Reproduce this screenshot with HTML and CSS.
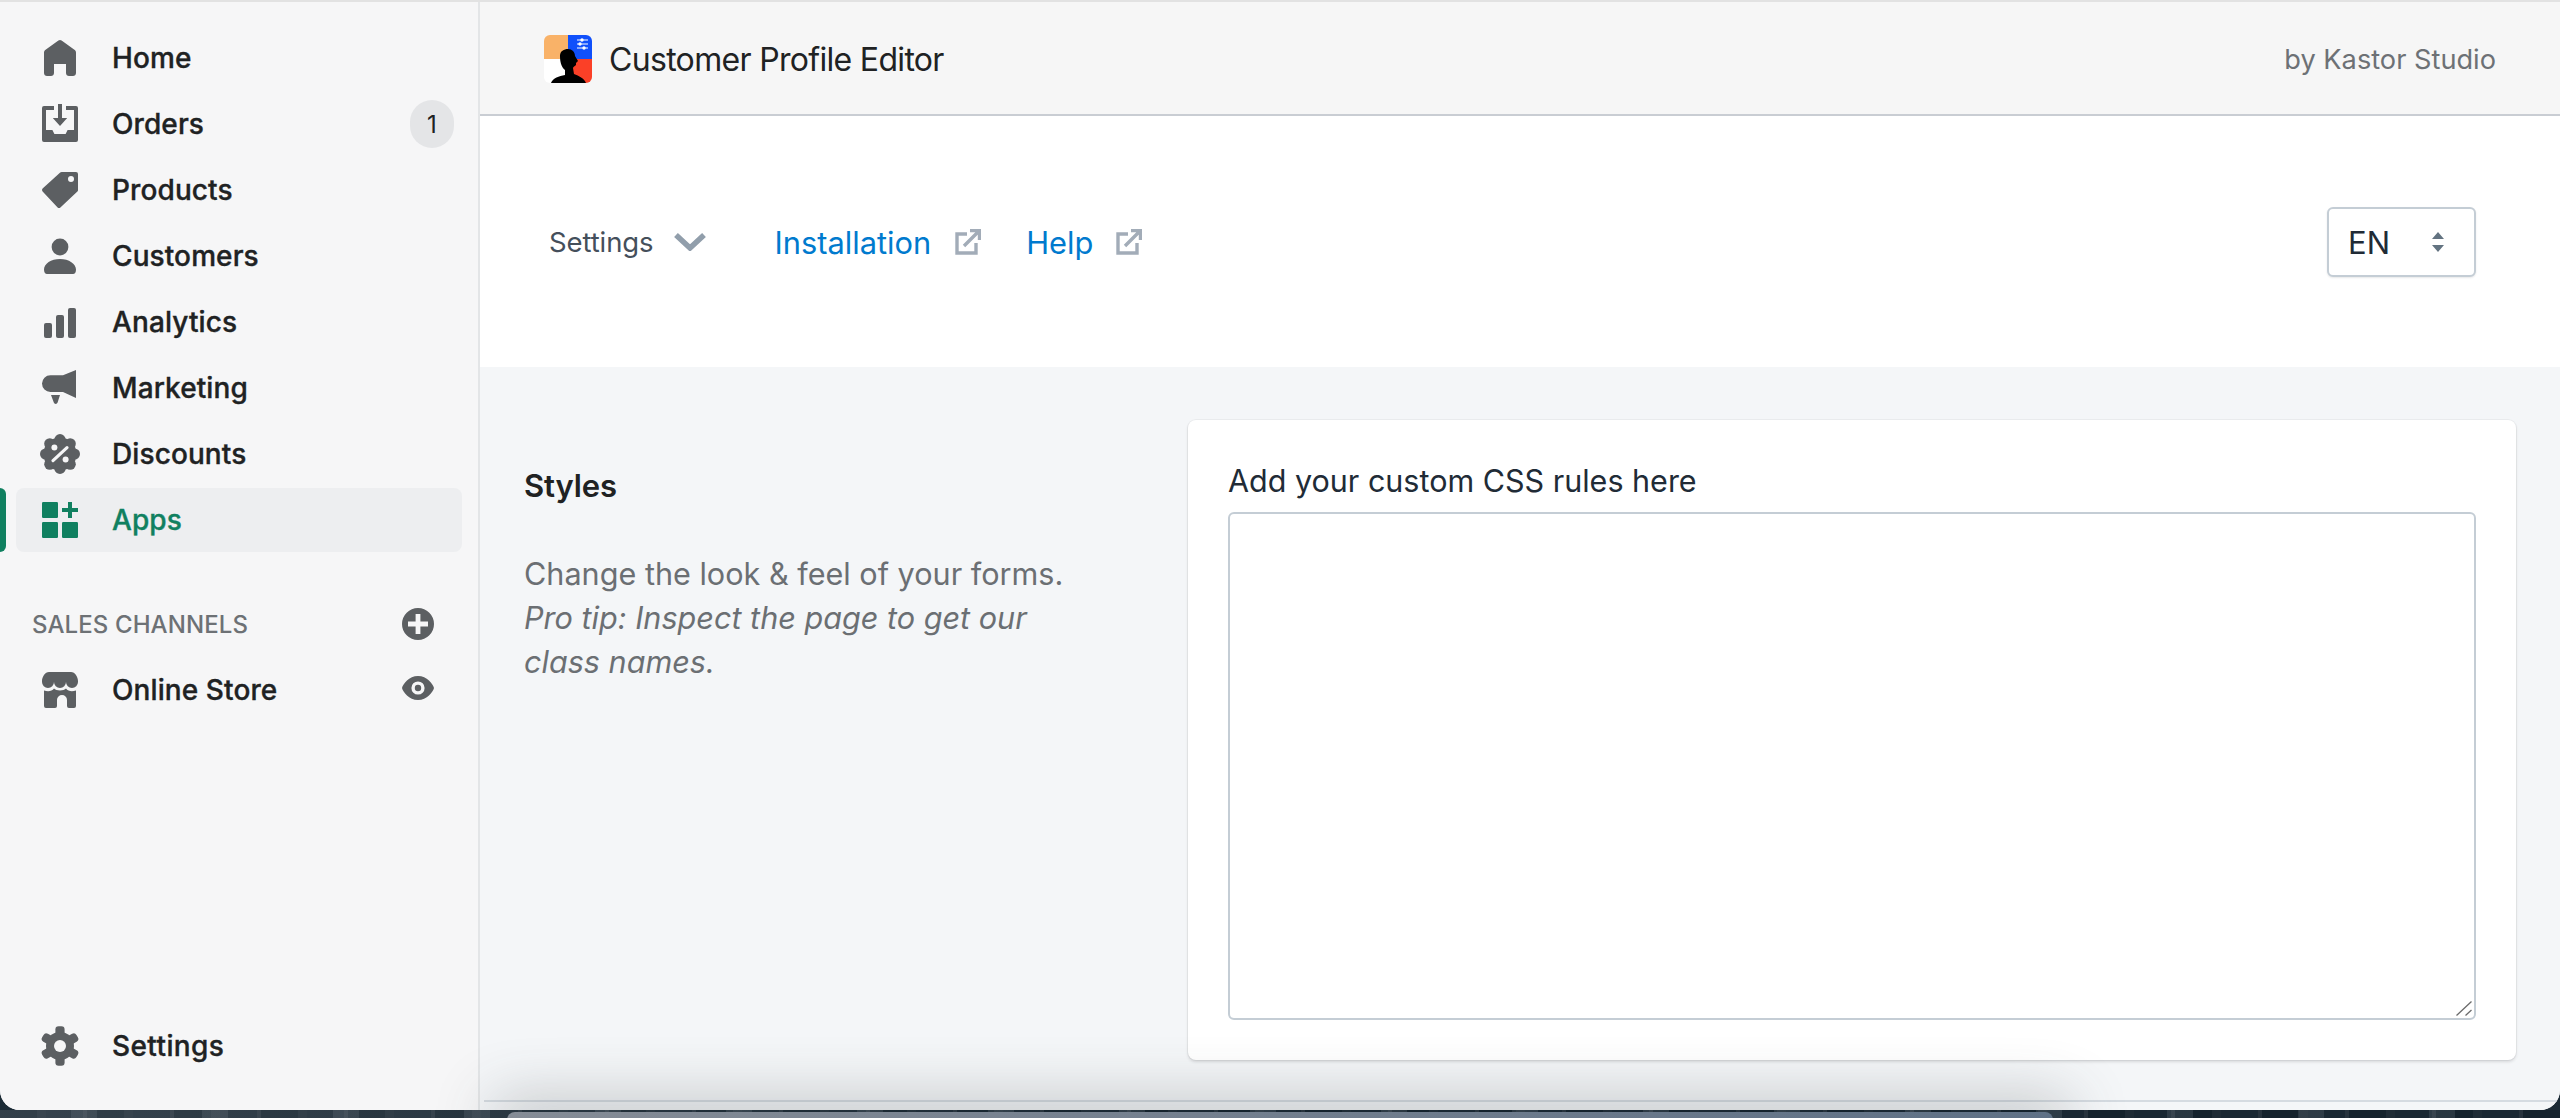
FILE: index.html
```html
<!DOCTYPE html>
<html lang="en">
<head>
<meta charset="utf-8">
<title>Customer Profile Editor</title>
<link rel="stylesheet" href="styles.css">
</head>
<body>
<div class="window">
  <aside class="sidebar">
    <nav class="menu">
      <a class="item"><svg class="ico" viewBox="0 0 20 20"><path d="M18 7.261V17.5c0 .841-.672 1.5-1.5 1.5h-2c-.828 0-1.500-.659-1.500-1.500V13H7v4.477C7 18.318 6.328 19 5.500 19h-2c-.828 0-1.500-.682-1.500-1.523V7.261a1.500 1.500 0 0 1 .615-1.210l6.590-4.820a1.481 1.481 0 0 1 1.590 0l6.590 4.820A1.500 1.500 0 0 1 18 7.260z"/></svg><span class="label">Home</span></a>
      <a class="item"><svg class="ico" viewBox="0 0 20 20"><path fill-rule="evenodd" d="M2 1h5v2H3v10h3.200l1 2h5.600l1-2H17V3h-4V1h5a1 1 0 0 1 1 1v16a1 1 0 0 1-1 1H2a1 1 0 0 1-1-1V2a1 1 0 0 1 1-1z"/><path d="M9 0h2v7h2.600L10 11 6.400 7H9z"/></svg><span class="label">Orders</span><span class="badge">1</span></a>
      <a class="item"><svg class="ico" viewBox="0 0 20 20"><path fill-rule="evenodd" d="M18 1h-7.200a1 1 0 0 0-.7.3l-8.800 8a1 1 0 0 0 0 1.400l7.500 8a1 1 0 0 0 1.400 0l8.500-7.900a1 1 0 0 0 .3-.7V2a1 1 0 0 0-1-1zm-2.500 5a1.500 1.500 0 1 1 0-3 1.500 1.500 0 0 1 0 3z"/></svg><span class="label">Products</span></a>
      <a class="item"><svg class="ico" viewBox="0 0 20 20"><circle cx="10" cy="5.500" r="4.200"/><path d="M10 11.500c-4.500 0-8 2.400-8 5.300C2 18.400 2.700 19 3.500 19h13c.9 0 1.500-.6 1.500-2.200 0-2.900-3.500-5.300-8-5.300z"/></svg><span class="label">Customers</span></a>
      <a class="item"><svg class="ico" viewBox="0 0 20 20"><rect x="2" y="10.500" width="4" height="7.500" rx="1"/><rect x="8" y="6.500" width="4" height="11.500" rx="1"/><rect x="14" y="3" width="4" height="15" rx="1"/></svg><span class="label">Analytics</span></a>
      <a class="item"><svg class="ico" viewBox="0 0 20 20"><path d="M18 1v14l-6.500-3H5.200a4.200 4.200 0 0 1 0-8.400h6.300z"/><path d="M5.500 13.500h4.500l-1.200 3.800a1 1 0 0 1-1.900 0z"/></svg><span class="label">Marketing</span></a>
      <a class="item"><svg class="ico" viewBox="0 0 20 20"><circle cx="10" cy="10" r="8.300"/><circle cx="10" cy="2.800" r="2.800"/><circle cx="15.100" cy="4.900" r="2.800"/><circle cx="17.200" cy="10" r="2.800"/><circle cx="15.100" cy="15.100" r="2.800"/><circle cx="10" cy="17.200" r="2.800"/><circle cx="4.900" cy="15.100" r="2.800"/><circle cx="2.800" cy="10" r="2.800"/><circle cx="4.900" cy="4.900" r="2.800"/><circle class="cut" cx="7.200" cy="6.800" r="1.500"/><circle class="cut" cx="12.800" cy="12.800" r="1.500"/><path class="slash" d="M6.500 13.300l7-6.500"/></svg><span class="label">Discounts</span></a>
      <a class="item active"><span class="bar"></span><svg class="ico" viewBox="0 0 20 20"><rect x="1" y="1" width="8" height="8" rx=".6"/><rect x="1" y="11" width="8" height="8" rx=".6"/><rect x="11" y="11" width="8" height="8" rx=".6"/><path d="M14 1h2v3h3v2h-3v3h-2V6h-3V4h3z"/></svg><span class="label">Apps</span></a>
    </nav>
    <div class="section-head"><span class="section-title">SALES CHANNELS</span><svg class="side-ico" viewBox="0 0 20 20"><path fill-rule="evenodd" d="M10 2a8 8 0 1 0 0 16 8 8 0 0 0 0-16zM8.800 5h2.400v3.800H15v2.400h-3.800V15H8.800v-3.800H5V8.800h3.800z"/></svg></div>
    <a class="item"><svg class="ico" viewBox="0 0 20 20"><path d="M4.500 1h11c2 0 3.500 2.500 3.500 4.500V6a3 3 0 0 1-6 0 3 3 0 0 1-6 0 3 3 0 0 1-6 0v-.5C1 3.500 2.500 1 4.500 1z"/><path d="M2 10.200c2 .8 4 .4 5-.9 1 1.300 5 1.300 6 0 1 1.300 3 1.700 5 .9V18a1 1 0 0 1-1 1h-2.500a1 1 0 0 1-1-1v-3a2.500 2.500 0 0 0-5 0v3a1 1 0 0 1-1 1H3a1 1 0 0 1-1-1z"/></svg><span class="label">Online Store</span><svg class="side-ico eye" viewBox="0 1 20 20"><path fill-rule="evenodd" d="M10 4c4.500 0 7.500 4 8 6-.5 2-3.500 6-8 6s-7.500-4-8-6c.5-2 3.500-6 8-6zm0 9.300a3.300 3.300 0 1 0 0-6.600 3.300 3.300 0 0 0 0 6.600zm0-1.700a1.600 1.600 0 1 1 0-3.200 1.600 1.600 0 0 1 0 3.200z"/></svg></a>
    <a class="item bottom"><svg class="ico" viewBox="0 0 20 20"><g class="gear"><rect x="7.700" y=".1" width="4.600" height="5" rx="1.600"/><rect x="7.700" y=".1" width="4.600" height="5" rx="1.600" transform="rotate(60 10 10)"/><rect x="7.700" y=".1" width="4.600" height="5" rx="1.600" transform="rotate(120 10 10)"/><rect x="7.700" y=".1" width="4.600" height="5" rx="1.600" transform="rotate(180 10 10)"/><rect x="7.700" y=".1" width="4.600" height="5" rx="1.600" transform="rotate(240 10 10)"/><rect x="7.700" y=".1" width="4.600" height="5" rx="1.600" transform="rotate(300 10 10)"/><circle cx="10" cy="10" r="7"/><circle class="cut" cx="10" cy="10" r="3"/></g></svg><span class="label wide">Settings</span></a>
  </aside>
  <main class="main">
    <header class="top">
      <div class="brand">
        <svg class="logo" viewBox="0 0 48 48"><rect width="24" height="24" fill="#f9b268"/><rect x="24" width="24" height="24" fill="#1050fb"/><rect y="24" width="24" height="24" fill="#fff"/><rect x="24" y="24" width="24" height="24" fill="#fb4027"/><path d="M7 48c2-5 8-7 14-8v-5c-4-3-5-9-5-14 0-5 4-7 8-7s7 3 7 7l3 5-2 2v2c-1 1-3 2-3 3l1 6c5 2 10 4 12 9z" fill="#000"/><path class="sliders" d="M33 5h11M33 9h11M33 13h11"/><circle cx="38" cy="5" r="1.700" fill="#fff"/><circle cx="36" cy="9" r="1.700" fill="#fff"/><circle cx="40" cy="13" r="1.700" fill="#fff"/></svg>
        <span class="app-name">Customer Profile Editor</span>
      </div>
      <span class="by">by Kastor Studio</span>
    </header>
    <div class="subnav">
      <div class="tab"><span class="settings-link">Settings</span><svg class="chev" viewBox="0 0 32 18"><path d="M2 2l14 13L30 2"/></svg></div>
      <a class="ext first"><span>Installation</span><svg class="ext-ico" viewBox="0 0 26 26"><path d="M12 5H2v19h19V14"/><path d="M9 17L24 2M15 1.500h9.500V11"/></svg></a>
      <a class="ext last"><span>Help</span><svg class="ext-ico" viewBox="0 0 26 26"><path d="M12 5H2v19h19V14"/><path d="M9 17L24 2M15 1.500h9.500V11"/></svg></a>
      <div class="lang"><span>EN</span><svg class="updown" viewBox="0 0 12 20"><path d="M6 0l6 7H0zM6 20l6-7H0z"/></svg></div>
    </div>
    <section class="content">
      <div class="intro">
        <h2 class="intro-title">Styles</h2>
        <p class="intro-text">Change the look &amp; feel of your forms.<br><em>Pro tip: Inspect the page to get our class names.</em></p>
      </div>
      <div class="card">
        <label class="field-label" for="css">Add your custom CSS rules here</label>
        <div class="field-wrap">
          <textarea class="field" id="css"></textarea>
          <svg class="grip" viewBox="0 0 16 15"><path d="M.5 14.500L15.500.5M9.500 14.500l6-5.500"/></svg>
        </div>
      </div>
    </section>
    <div class="foot-line"></div>
    <div class="under-shadow"></div>
  </main>
</div>
<div class="desktop"><div class="peek"></div></div>
</body>
</html>
```
FILE: styles.css
```css
* { box-sizing: border-box; }
html, body { margin: 0; height: 1118px; overflow: hidden; }
body {
  font-family: Inter, "Liberation Sans", sans-serif;
  background: #1b2a35;
  color: #202223;
}
.window {
  height: 1110px;
  display: flex;
  border-top: 2px solid #e2e2e2;
  border-radius: 0 0 20px 20px;
  overflow: hidden;
  background: #f6f6f7;
}
.sidebar {
  width: 480px;
  flex: none;
  display: flex;
  flex-direction: column;
  background: #f6f6f7;
  border-right: 2px solid #e3e5e7;
  padding: 24px 0 32px;
}
.menu { display: flex; flex-direction: column; gap: 2px; }
.item {
  position: relative;
  height: 64px;
  margin: 0 16px;
  padding: 0 8px 0 24px;
  display: flex;
  align-items: center;
  border-radius: 8px;
}
.ico { width: 40px; height: 40px; flex: none; fill: #5c5f62; margin-right: 32px; }
.cut { fill: #f6f6f7; }
.slash { fill: none; stroke: #f6f6f7; stroke-width: 1.6; stroke-linecap: round; }
.label { font-size: 28px; font-weight: 500; letter-spacing: .1px; color: #202223; -webkit-text-stroke: .35px currentColor; }
.label.wide { letter-spacing: .4px; }
.badge {
  margin-left: auto;
  width: 44px;
  height: 48px;
  border-radius: 24px;
  background: #e4e5e7;
  display: flex;
  align-items: center;
  justify-content: center;
  font-size: 24px;
  font-weight: 400;
}
.active { background: #edeef0; }
.active .ico { fill: #108060; }
.active .label { color: #108060; }
.bar {
  position: absolute;
  left: -16px;
  top: 0;
  bottom: 0;
  width: 6px;
  background: #108060;
  border-radius: 0 6px 6px 0;
}
.section-head {
  display: flex;
  align-items: center;
  justify-content: space-between;
  margin: 52px 40px 14px 32px;
  height: 40px;
}
.section-title { font-size: 24px; font-weight: 500; letter-spacing: .1px; color: #6d7175; }
.side-ico { width: 40px; height: 40px; fill: #5c5f62; }
.eye { margin-left: auto; margin-right: 16px; }
.bottom { margin-top: auto; }

.main { position: relative; flex: 1; display: flex; flex-direction: column; background: #f4f6f8; min-width: 0; }
.top {
  height: 114px;
  flex: none;
  display: flex;
  align-items: center;
  justify-content: space-between;
  background: #f6f6f6;
  border-bottom: 2px solid #c9cdd3;
  padding: 2px 64px 0 64px;
}
.brand { display: flex; align-items: center; }
.logo { width: 48px; height: 48px; border-radius: 6px; margin-right: 17px; }
.sliders { stroke: #fff; stroke-width: 1.200; fill: none; }
.app-name { font-size: 32px; letter-spacing: -.68px; color: #202223; }
.by { font-size: 27.200px; color: #6d7175; }

.subnav {
  height: 251px;
  flex: none;
  background: #fff;
  display: flex;
  align-items: center;
  padding: 1px 84px 0 69px;
}
.tab { display: flex; align-items: center; }
.settings-link { font-size: 27.500px; letter-spacing: -.1px; color: #454f5b; }
.chev { width: 32px; height: 18px; margin-left: 20px; fill: none; stroke: #919eab; stroke-width: 5.500; }
.ext { display: flex; align-items: center; color: #007ace; font-size: 30.800px; margin-left: 45px; }
.ext.first { margin-left: 69px; }
.ext-ico { width: 26px; height: 26px; margin-left: 24px; fill: none; stroke: #a2acb8; stroke-width: 3.400; }
.ext.last .ext-ico { margin-left: 23px; }
.lang {
  margin-left: auto;
  width: 149px;
  height: 70px;
  border: 2px solid #c4cdd5;
  border-radius: 6px;
  background: #fff;
  box-shadow: 0 1px 2px rgba(22, 29, 37, .1);
  display: flex;
  align-items: center;
  justify-content: space-between;
  padding: 0 30px 0 19px;
  font-size: 31px;
  color: #212b36;
}
.updown { width: 12px; height: 20px; fill: #637381; }

.content {
  flex: 1;
  min-height: 0;
  display: flex;
  align-items: flex-start;
  padding: 53px 44px 0 44px;
}
.intro { width: 664px; flex: none; padding-top: 44px; }
.intro-title { margin: 0; font-size: 31px; line-height: 44px; font-weight: 600; letter-spacing: -.1px; color: #202223; }
.intro-text { margin: 44px 0 0; width: 545px; font-size: 30.600px; line-height: 44px; color: #6b6f73; }
.card {
  flex: 1;
  height: 640px;
  background: #fff;
  border-radius: 8px;
  box-shadow: 0 0 0 1px rgba(63, 63, 68, .05), 0 2px 3px rgba(63, 63, 68, .16);
  padding: 40px;
  display: flex;
  flex-direction: column;
}
.field-label { font-size: 30.500px; line-height: 44px; height: 53px; color: #212b36; margin-top: -1px; }
.field-wrap { position: relative; flex: 1; min-height: 0; }
.field {
  width: 100%;
  height: 100%;
  border: 2px solid #c4cdd5;
  border-radius: 6px;
  background: #fff;
  outline: none;
  display: block;
  resize: none;
}
.grip {
  position: absolute;
  right: 4px;
  bottom: 4px;
  width: 16px;
  height: 15px;
  fill: none;
  stroke: #6b6b6b;
  stroke-width: 1.300;
}
.foot-line { height: 2px; flex: none; margin: 0 0 8px 4px; background: #d5dbe1; }
.under-shadow {
  position: absolute;
  left: 30px;
  width: 1543px;
  bottom: -20px;
  height: 14px;
  background: rgba(60, 65, 70, .5);
  box-shadow: 0 0 60px 16px rgba(60, 65, 70, .3);
}

.desktop {
  position: relative;
  height: 8px;
  overflow: hidden;
  background:
    linear-gradient(90deg, rgba(120, 130, 140, .3), rgba(120, 130, 140, 0) 45%),
    repeating-linear-gradient(90deg, transparent 0 71px, rgba(150, 160, 170, .16) 71px 97px, transparent 97px 131px),
    repeating-linear-gradient(90deg, #15232d 0 37px, #1f2c36 37px 46px, #1a2833 46px 83px, #27333d 83px 87px);
}
.peek {
  position: absolute;
  left: 507px;
  width: 1546px;
  top: 2px;
  height: 20px;
  border-radius: 8px 8px 0 0;
  background: linear-gradient(90deg, #858c96, #5f7186);
}
```
